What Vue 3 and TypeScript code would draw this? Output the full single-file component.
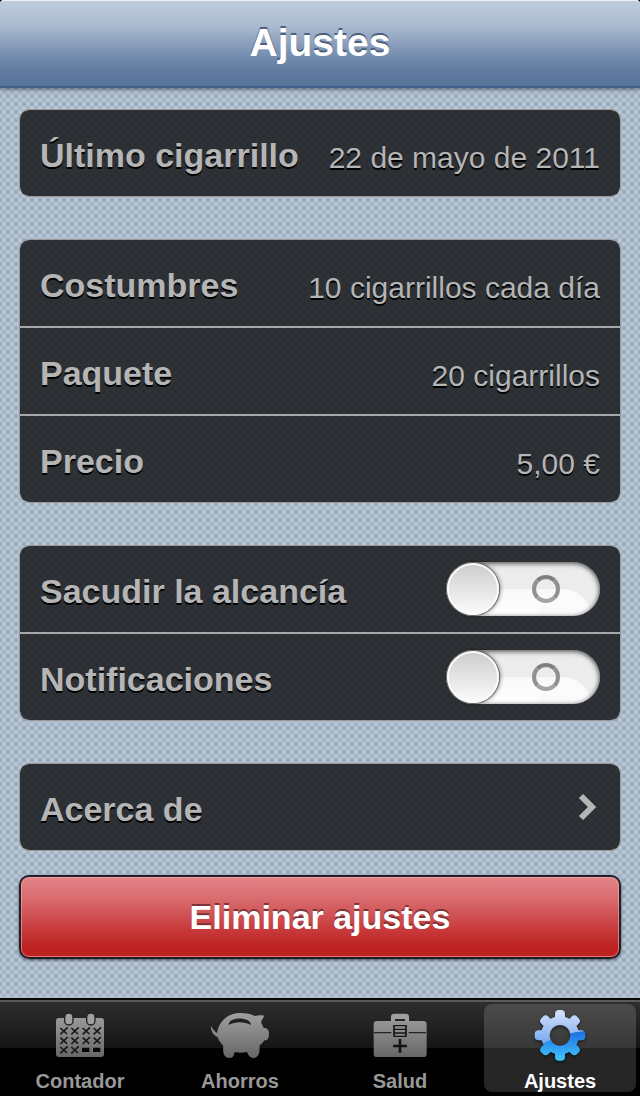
<script setup lang="ts">
import { ref } from 'vue'

interface Setting {
  name: string
  value: string
}

interface Toggle {
  id: string
  name: string
  on: boolean
}

const groups: Setting[][] = [
  [{ name: 'Último cigarrillo', value: '22 de mayo de 2011' }],
  [
    { name: 'Costumbres', value: '10 cigarrillos cada día' },
    { name: 'Paquete', value: '20 cigarrillos' },
    { name: 'Precio', value: '5,00 €' },
  ],
]

const toggles = ref<Toggle[]>([
  { id: 'shake', name: 'Sacudir la alcancía', on: false },
  { id: 'notifications', name: 'Notificaciones', on: false },
])

const crosses = [
  [191, 123], [224, 123], [258, 123], [291, 123],
  [191, 152], [224, 152], [258, 152], [291, 152],
  [191, 180], [224, 180],
]

const teeth = [0, 45, 90, 135, 180, 225, 270, 315]
</script>

<template>
  <div class="screen">
    <header class="bar">
      <h1>Ajustes</h1>
    </header>

    <main class="content">
      <dl v-for="(group, i) in groups" :key="i" class="card">
        <div v-for="item in group" :key="item.name" class="row">
          <dt class="name">{{ item.name }}</dt>
          <dd class="value">{{ item.value }}</dd>
        </div>
      </dl>

      <div class="card">
        <div v-for="toggle in toggles" :key="toggle.id" class="row">
          <label class="name" :for="toggle.id">{{ toggle.name }}</label>
          <input :id="toggle.id" v-model="toggle.on" class="switch" type="checkbox" role="switch" />
        </div>
      </div>

      <div class="card">
        <a class="row" href="#acerca">
          <span class="name">Acerca de</span>
          <svg class="chevron" viewBox="0 0 24 32" aria-hidden="true">
            <path d="M5 5 L16 16 L5 27" />
          </svg>
        </a>
      </div>

      <button class="danger" type="button">Eliminar ajustes</button>
    </main>

    <nav class="tabs">
      <a class="tab" href="#contador">
        <svg class="icon" viewBox="150 48 180 180" aria-hidden="true">
          <defs>
            <linearGradient id="grey" gradientUnits="userSpaceOnUse" x1="0" y1="68" x2="0" y2="204">
              <stop offset="0" stop-color="#a0a0a0" />
              <stop offset="1" stop-color="#666" />
            </linearGradient>
          </defs>
          <rect x="168" y="84" width="144" height="117" rx="9" fill="url(#grey)" />
          <g fill="#a0a0a0" stroke="#222" stroke-width="4">
            <rect x="194" y="69" width="25" height="36" rx="12" />
            <rect x="260" y="69" width="25" height="36" rx="12" />
          </g>
          <path
            v-for="[x, y] in crosses"
            :key="`${x}-${y}`"
            :d="`M${x - 10} ${y - 9} L${x + 10} ${y + 9} M${x + 12} ${y - 11} L${x - 10} ${y + 10}`"
            fill="none"
            stroke="#181818"
            stroke-width="5"
          />
          <path d="M246 173 h22 v13 h-22 z M279 173 h22 v13 h-22 z" fill="#080808" />
        </svg>
        <span>Contador</span>
      </a>

      <a class="tab" href="#ahorros">
        <svg class="icon" viewBox="150 48 180 180" aria-hidden="true">
          <path
            d="M153 107 C157 114 163 124 171 129 C177 92 206 69 240 69 C258 69 273 72 285 78 C293 75 304 75 312 77 C312 83 304 89 303 98 C307 103 309 109 311 114 C322 112 327 120 327 132 C327 145 321 153 313 151 C310 158 304 162 299 166 C298 177 300 183 297 190 C293 207 273 208 266 196 C262 191 263 186 259 186 C248 189 236 189 224 186 C222 193 222 204 208 204 C190 204 188 185 190 168 C184 161 175 151 173 141 C161 137 152 124 153 107 Z"
            fill="url(#grey)"
          />
          <path d="M206 105 C206 79 272 80 273 105 C251 94 227 94 206 105 Z" fill="#202020" />
        </svg>
        <span>Ahorros</span>
      </a>

      <a class="tab" href="#salud">
        <svg class="icon" viewBox="150 48 180 180" aria-hidden="true">
          <path d="M213 96 V80 Q213 71 222 71 H258 Q267 71 267 80 V96 H255 V87 H225 V96 Z" fill="#a0a0a0" />
          <rect x="161" y="93" width="159" height="108" rx="10" fill="url(#grey)" />
          <path d="M162 128 H214 M266 128 H318" stroke="#222" stroke-width="4" />
          <path d="M222 105 V140 M258 105 V140" stroke="#151515" stroke-width="5" />
          <path d="M222 107 H258 M222 118 H258 M222 129 H258 M222 139 H258" stroke="#151515" stroke-width="4" />
          <path d="M240 147 V188 M219 168 H261" stroke="#151515" stroke-width="8" />
        </svg>
        <span>Salud</span>
      </a>

      <a class="tab active" href="#ajustes" aria-current="page">
        <svg class="icon" viewBox="150 48 180 180" aria-hidden="true">
          <defs>
            <linearGradient id="pale" x1="0" y1="0" x2="0" y2="1">
              <stop offset="0" stop-color="#dbe4fb" />
              <stop offset="1" stop-color="#6fa6ee" />
            </linearGradient>
            <linearGradient id="vivid" gradientUnits="userSpaceOnUse" x1="0" y1="120" x2="0" y2="212">
              <stop offset="0" stop-color="#1c6be0" />
              <stop offset="1" stop-color="#3fc6ff" />
            </linearGradient>
            <mask id="gear">
              <circle cx="240" cy="136" r="57" fill="#fff" />
              <rect
                v-for="angle in teeth"
                :key="angle"
                x="225"
                y="60"
                width="30"
                height="40"
                rx="12"
                fill="#fff"
                :transform="`rotate(${angle} 240 136)`"
              />
              <circle cx="240" cy="136" r="31" fill="#000" />
            </mask>
          </defs>
          <g class="gear">
            <g mask="url(#gear)">
              <rect x="160" y="56" width="160" height="160" fill="url(#vivid)" />
              <path d="M160 56 H320 V122 Q250 128 190 160 Q175 164 160 164 Z" fill="url(#pale)" />
            </g>
          </g>
        </svg>
        <span>Ajustes</span>
      </a>
    </nav>
  </div>
</template>

<style>
body {
  margin: 0;
  background: #000;
}
</style>

<style scoped>
.screen {
  display: flex;
  flex-direction: column;
  min-height: 100vh;
  font-family: "Liberation Sans", Arial, sans-serif;
}

.bar {
  box-sizing: border-box;
  display: flex;
  align-items: center;
  justify-content: center;
  height: 88px;
  border-bottom: 2px solid #415f8b;
  border-radius: 4px 4px 0 0;
  background: linear-gradient(#c0cddf, #adbcd1 28%, #7c93b4 60%, #617da1 80%, #587299);
  box-shadow: inset 0 1px #eef2f7, 0 1px 5px rgb(0 0 0 / 50%);
  z-index: 1;
}

h1 {
  margin: 0;
  color: #fff;
  font-size: 39px;
  line-height: 48px;
  text-shadow: 0 -2px #4c5f7c;
}

.content {
  flex: 1;
  display: flex;
  flex-direction: column;
  padding: 21px 19px 38px;
  background-color: #b8c7d5;
  background-image:
    linear-gradient(45deg, rgb(100 120 140 / 24%) 10%, transparent 20% 38%, rgb(100 120 140 / 24%) 50%, transparent 62% 80%, rgb(100 120 140 / 24%) 90%),
    linear-gradient(135deg, rgb(100 120 140 / 24%) 10%, transparent 20% 38%, rgb(100 120 140 / 24%) 50%, transparent 62% 80%, rgb(100 120 140 / 24%) 90%);
  background-size: 8px 8px;
}

.card {
  margin: 0 0 42px;
  border: 1px solid #999;
  border-radius: 10px;
  background: rgb(23 25 27 / 86%);
  background-clip: padding-box;
}

.row {
  display: flex;
  align-items: center;
  justify-content: space-between;
  height: 86px;
  padding: 0 20px;
  color: #b5b5b5;
  text-decoration: none;
  text-shadow: 0 2px #000;
}

.row + .row {
  border-top: 2px solid #a6a8aa;
}

.name {
  padding-top: 4px;
  font-size: 34px;
  font-weight: bold;
  line-height: 40px;
}

.value {
  margin: 0;
  padding-top: 10px;
  font-size: 30px;
  line-height: 36px;
}

.switch {
  appearance: none;
  box-sizing: border-box;
  display: flex;
  align-items: center;
  justify-content: space-between;
  width: 154px;
  height: 54px;
  margin: 0;
  padding: 0 40px 0 1px;
  border-radius: 27px;
  background:
    radial-gradient(circle 27px at 118px 27px, #fbfbfb 26px, transparent 27px) 0 27px / 146px 27px no-repeat,
    linear-gradient(#f8f8f8, #fff) 0 27px / 118px 27px no-repeat,
    #ececec;
  box-shadow: inset 0 2px 5px rgb(0 0 0 / 50%), inset -1px 0 4px rgb(0 0 0 / 30%);
}

.switch::before {
  content: "";
  box-sizing: border-box;
  width: 52px;
  height: 52px;
  border: 2px solid #fafafa;
  border-radius: 50%;
  background: linear-gradient(#cecece, #fafafa);
  box-shadow: 0 0 0 1px #666, 1px 0 4px rgb(0 0 0 / 60%);
}

.switch::after {
  content: "";
  box-sizing: border-box;
  width: 28px;
  height: 28px;
  border: 4px solid #909090;
  border-top-color: #808080;
  border-bottom-color: #a4a4a4;
  border-radius: 50%;
}

.switch:checked {
  flex-direction: row-reverse;
  padding: 0 1px 0 40px;
}

.chevron {
  width: 24px;
  height: 32px;
  fill: none;
  stroke: #b5b5b5;
  stroke-width: 6;
}

.danger {
  height: 84px;
  margin-top: -18px;
  border: 2px solid #1d2028;
  border-radius: 10px;
  background: linear-gradient(#e28488, #d7686b 30%, #c83b3d 65%, #be2321 88%, #be2321);
  box-shadow: inset 0 0 0 1px rgb(255 170 175 / 60%), 0 1px 3px rgb(0 0 0 / 60%);
  color: #fff;
  font: bold 34px/40px "Liberation Sans", Arial, sans-serif;
  text-shadow: 0 -2px #7d3436;
}

.tabs {
  box-sizing: border-box;
  display: flex;
  height: 98px;
  padding: 3px 0 4px;
  border-top: 2px solid #0b0b0c;
  background: linear-gradient(#5a5a5a 2px, #2e2e2e 2px, #151515 48px, #000 48px);
}

.tab {
  flex: 1;
  display: flex;
  flex-direction: column;
  align-items: center;
  margin: 1px 4px 0;
  padding-top: 2px;
  border-radius: 8px;
  color: #989898;
  font-size: 20px;
  font-weight: bold;
  line-height: 30px;
  text-decoration: none;
}

.active {
  background: rgb(255 255 255 / 15%);
  color: #fff;
}

.icon {
  flex: none;
  width: 60px;
  height: 60px;
}

.gear {
  filter: drop-shadow(0 4px 4px rgb(0 0 0 / 60%));
}
</style>
